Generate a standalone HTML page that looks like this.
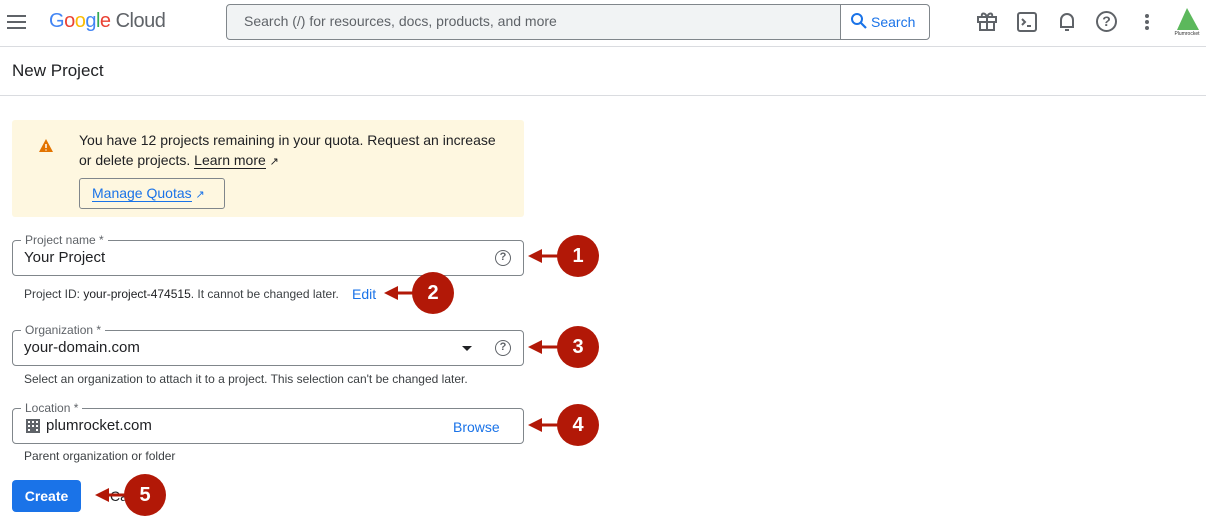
<!DOCTYPE html>
<html><head><meta charset="utf-8"><style>
*{box-sizing:border-box;margin:0;padding:0}
body{width:1206px;height:522px;background:#fff;font-family:"Liberation Sans",Roboto,sans-serif;color:#202124;position:relative;overflow:hidden}
.a{position:absolute}
.fld{position:absolute;left:12px;width:512px;border:1px solid #80868b;border-radius:4px;height:36px}
.lbl{position:absolute;top:-8px;left:8px;background:#fff;padding:0 4px;font-size:12px;color:#5f6368}
.val{position:absolute;left:11px;top:8px;font-size:15px;color:#202124}
.hint{position:absolute;left:24px;font-size:12px;color:#3c4043}
.q{position:absolute;width:16px;height:16px;border:1.6px solid #5f6368;border-radius:50%;font-size:11px;font-weight:bold;color:#5f6368;text-align:center;line-height:13px}
.num{position:absolute;width:42px;height:42px;border-radius:50%;background:#b21807;color:#fff;font-weight:bold;font-size:20px;text-align:center;line-height:42px}
</style></head><body>
<div class="a" style="left:7px;top:15px;width:19px;height:2px;background:#5f6368;box-shadow:0 6px 0 #5f6368,0 12px 0 #5f6368"></div>
<div class="a" style="left:49px;top:10px;font-size:20px;letter-spacing:-0.5px"><span style="color:#4285f4">G</span><span style="color:#ea4335">o</span><span style="color:#fbbc04">o</span><span style="color:#4285f4">g</span><span style="color:#34a853">l</span><span style="color:#ea4335">e</span> <span style="color:#5f6368">Cloud</span></div>
<div class="a" style="left:226px;top:4px;width:704px;height:36px;border:1px solid #80868b;border-radius:4px;background:#f1f3f4"></div>
<div class="a" style="left:244px;top:13px;font-size:14px;color:#5f6368">Search (/) for resources, docs, products, and more</div>
<div class="a" style="left:840px;top:5px;width:89px;height:34px;background:#fff;border-left:1px solid #80868b;border-radius:0 4px 4px 0"></div>
<svg class="a" style="left:850px;top:12px" width="18" height="18" viewBox="0 0 18 18"><circle cx="7" cy="7" r="5" fill="none" stroke="#1a73e8" stroke-width="2"/><path d="M11 11l5 5" stroke="#1a73e8" stroke-width="2.2"/></svg>
<div class="a" style="left:871px;top:14px;font-size:14px;color:#1a73e8">Search</div>
<svg class="a" style="left:976px;top:10px" width="22" height="22" viewBox="0 0 22 22" fill="none" stroke="#5f6368" stroke-width="2"><rect x="2" y="7" width="18" height="5"/><rect x="4" y="12" width="14" height="8"/><path d="M11 7v13M11 7C9 2 5 3 6 6M11 7c2-5 6-4 5-1"/></svg>
<svg class="a" style="left:1017px;top:12px" width="20" height="20" viewBox="0 0 20 20" fill="none" stroke="#5f6368" stroke-width="2"><rect x="1" y="1" width="18" height="18" rx="2"/><path d="M5 7l3 3-3 3M10 14h4"/></svg>
<svg class="a" style="left:1058px;top:11px" width="18" height="22" viewBox="0 0 18 22" fill="none" stroke="#5f6368" stroke-width="2"><path d="M3 16V9a6 6 0 0112 0v7H2h14M7 19h4"/></svg>
<div class="q" style="left:1096px;top:11px;width:21px;height:21px;border-width:2px;font-size:14px;line-height:17px">?</div>
<div class="a" style="left:1145px;top:14px;width:4px;height:4px;background:#5f6368;border-radius:50%;box-shadow:0 6px 0 #5f6368,0 12px 0 #5f6368"></div>
<svg class="a" style="left:1172px;top:6px" width="30" height="32" viewBox="0 0 30 32"><path d="M15 2L27 24H5z" fill="#5cb85c"/><text x="15" y="29" font-size="5" text-anchor="middle" fill="#333" font-family="Liberation Sans">Plumrocket</text></svg>
<div class="a" style="left:0;top:46px;width:1206px;height:1px;background:#dadce0"></div>
<div class="a" style="left:12px;top:61px;font-size:17px">New Project</div>
<div class="a" style="left:0;top:95px;width:1206px;height:1px;background:#dadce0"></div>
<div class="a" style="left:12px;top:120px;width:512px;height:97px;background:#fef7e0;border-radius:3px"></div>
<svg class="a" style="left:38px;top:138px" width="16" height="15" viewBox="0 0 16 15"><path d="M8 1L15 14H1z" fill="#e37400"/><path d="M8 6v4M8 11.5v1" stroke="#fff" stroke-width="1.5"/></svg>
<div class="a" style="left:79px;top:130px;font-size:14px;line-height:20px;width:430px">You have 12 projects remaining in your quota. Request an increase<br>or delete projects. <span style="border-bottom:1px solid #202124">Learn more</span> <span style="font-size:11px">↗</span></div>
<div class="a" style="left:79px;top:178px;width:146px;height:31px;border:1px solid #80868b;border-radius:3px"></div>
<div class="a" style="left:92px;top:185px;font-size:14px;color:#1a73e8"><span style="border-bottom:1px solid #1a73e8">Manage Quotas</span> <span style="font-size:11px">↗</span></div>
<div class="fld" style="top:240px"><div class="lbl">Project name *</div><div class="val">Your Project</div><div class="q" style="left:482px;top:9px">?</div></div>
<div class="hint" style="top:287px">Project ID: <b style="font-weight:normal;color:#202124">your-project-474515</b>. It cannot be changed later.</div>
<div class="a" style="left:352px;top:286px;font-size:14px;color:#1a73e8">Edit</div>
<div class="fld" style="top:330px"><div class="lbl">Organization *</div><div class="val">your-domain.com</div><div class="a" style="left:449px;top:15px;border:5px solid transparent;border-top-color:#202124"></div><div class="q" style="left:482px;top:9px">?</div></div>
<div class="hint" style="top:372px">Select an organization to attach it to a project. This selection can't be changed later.</div>
<div class="fld" style="top:408px"><div class="lbl">Location *</div>
<svg class="a" style="left:13px;top:10px" width="14" height="14" viewBox="0 0 14 14"><rect width="14" height="14" fill="#5f6368"/><g fill="#fff"><rect x="2" y="2" width="2" height="2"/><rect x="6" y="2" width="2" height="2"/><rect x="10" y="2" width="2" height="2"/><rect x="2" y="6" width="2" height="2"/><rect x="6" y="6" width="2" height="2"/><rect x="10" y="6" width="2" height="2"/><rect x="2" y="10" width="2" height="2"/><rect x="10" y="10" width="2" height="2"/></g></svg>
<div class="val" style="left:33px">plumrocket.com</div><div class="a" style="left:440px;top:10px;font-size:14px;color:#1a73e8">Browse</div></div>
<div class="hint" style="top:449px">Parent organization or folder</div>
<div class="a" style="left:12px;top:480px;width:69px;height:32px;background:#1a73e8;border-radius:4px;color:#fff;font-size:14px;font-weight:bold;text-align:center;line-height:32px">Create</div>
<div class="a" style="left:110px;top:488px;font-size:14px;color:#202124">Cancel</div>
<svg class="a" style="left:0;top:0" width="1206" height="522">
<g fill="#b21807" stroke="#b21807" stroke-width="3">
<path d="M540 256H560"/><path d="M528 256l14-7v14z" stroke="none"/>
<path d="M396 293H415"/><path d="M384 293l14-7v14z" stroke="none"/>
<path d="M540 347H560"/><path d="M528 347l14-7v14z" stroke="none"/>
<path d="M540 425H560"/><path d="M528 425l14-7v14z" stroke="none"/>
<path d="M107 495H128"/><path d="M95 495l14-7v14z" stroke="none"/>
</g></svg>
<div class="num" style="left:557px;top:235px">1</div>
<div class="num" style="left:412px;top:272px">2</div>
<div class="num" style="left:557px;top:326px">3</div>
<div class="num" style="left:557px;top:404px">4</div>
<div class="num" style="left:124px;top:474px">5</div>
</body></html>
